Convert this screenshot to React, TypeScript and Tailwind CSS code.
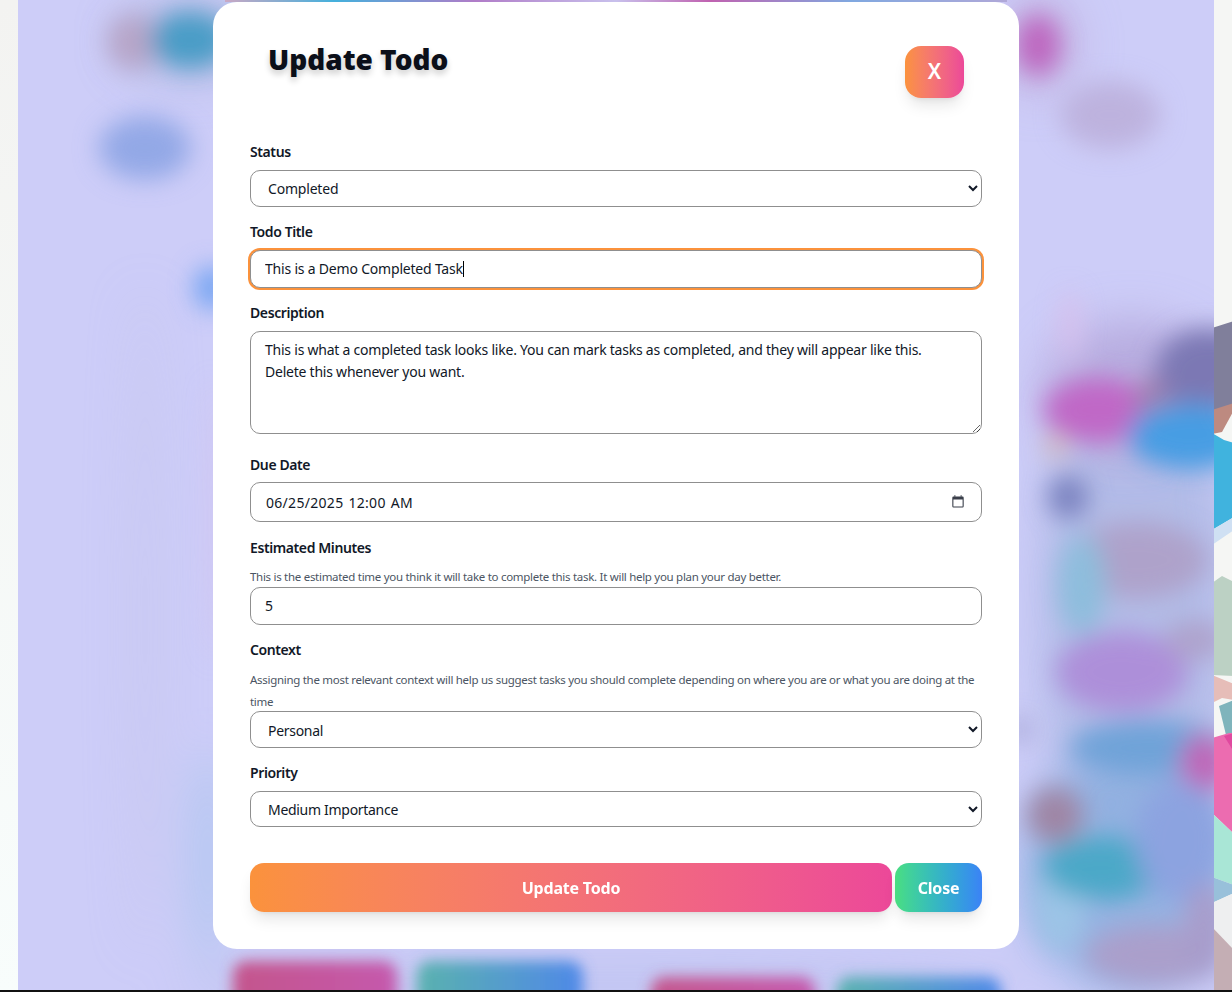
import React from "react";

const haze: [number, number, number, number, string, number][] = [
  [1135, 610, 95, 290, "#a9b6e2", 0.75],
  [1125, 870, 105, 120, "#8fb0e0", 0.9],
  [1130, 390, 90, 70, "#b8a8dc", 0.8],
  [190, 40, 70, 40, "#a8b4dc", 0.7],
  [208, 860, 14, 110, "#a6c4ec", 0.9],
  [600, 985, 420, 22, "#b8c0ec", 0.6],
  [1040, 45, 36, 50, "#bfa8d8", 0.7],
  [145, 620, 14, 330, "#c4c4ec", 0.6],
];

const blobs: [number, number, number, number, string][] = [
  [133, 42, 26, 28, "#b7a5c8"],
  [190, 40, 40, 28, "#4a9cc6"],
  [145, 148, 46, 32, "#93a8e6"],
  [212, 288, 18, 22, "#74a4f2"],
  [214, 520, 5, 140, "#d2c2ee"],
  [1038, 45, 22, 30, "#bd66bf"],
  [1110, 115, 50, 34, "#bdb2de"],
  [1070, 325, 9, 34, "#d8bfec"],
  [1098, 410, 54, 32, "#c068c6"],
  [1165, 398, 30, 24, "#a080b0"],
  [1208, 368, 52, 40, "#7b78b4"],
  [1056, 446, 9, 11, "#dcb8a8"],
  [1068, 497, 20, 22, "#7a82bf"],
  [1190, 436, 62, 33, "#479de3"],
  [1138, 560, 70, 38, "#aea2ca"],
  [1082, 585, 24, 50, "#8dbddc"],
  [1122, 672, 66, 40, "#ad8fd9"],
  [1195, 640, 30, 20, "#aea3cc"],
  [1150, 748, 80, 28, "#70a3d8"],
  [1204, 764, 24, 30, "#bf66b8"],
  [1020, 730, 8, 12, "#9a9acb"],
  [1060, 900, 26, 50, "#9cc4e6"],
  [1055, 815, 28, 28, "#9f85a4"],
  [1102, 868, 60, 32, "#4ca8c8"],
  [1180, 840, 44, 60, "#8ca3e0"],
  [1155, 955, 70, 30, "#aa9fcb"],
  [1205, 930, 22, 48, "#a79ccb"],
];

function Backdrop() {
  return (
    <svg className="absolute inset-0 h-full w-full" viewBox="18 0 1196 992" aria-hidden="true">
      <defs>
        <filter id="wide" x="-100%" y="-100%" width="300%" height="300%">
          <feGaussianBlur stdDeviation="22" />
        </filter>
        <filter id="soft" x="-80%" y="-80%" width="260%" height="260%">
          <feGaussianBlur stdDeviation="12" />
        </filter>
        <filter id="card" x="-30%" y="-60%" width="160%" height="220%">
          <feGaussianBlur stdDeviation="7" />
        </filter>
        <linearGradient id="pinkcard" x1="0" x2="1" y1="0" y2="0">
          <stop offset="0" stopColor="#c4558c" />
          <stop offset="1" stopColor="#c559ad" />
        </linearGradient>
        <linearGradient id="bluecard" x1="0" x2="1" y1="0" y2="0">
          <stop offset="0" stopColor="#5ab2ae" />
          <stop offset="1" stopColor="#4f88e8" />
        </linearGradient>
        <linearGradient id="topband" x1="0" x2="1" y1="0" y2="0">
          <stop offset="0" stopColor="#c9a8c4" />
          <stop offset="0.14" stopColor="#44b0dc" />
          <stop offset="0.32" stopColor="#b07cc8" />
          <stop offset="0.5" stopColor="#c8c0ec" />
          <stop offset="0.62" stopColor="#c062b0" />
          <stop offset="0.8" stopColor="#80a8e0" />
          <stop offset="1" stopColor="#b0a8d8" />
        </linearGradient>
      </defs>
      <g filter="url(#wide)">
        {haze.map(([cx, cy, rx, ry, fill, op], i) => (
          <ellipse key={i} cx={cx} cy={cy} rx={rx} ry={ry} fill={fill} opacity={op} />
        ))}
      </g>
      <g filter="url(#soft)">
        {blobs.map(([cx, cy, rx, ry, fill], i) => (
          <ellipse key={i} cx={cx} cy={cy} rx={rx} ry={ry} fill={fill} />
        ))}
      </g>
      <g filter="url(#card)">
        <rect x="233" y="961" width="164" height="50" rx="14" fill="url(#pinkcard)" />
        <rect x="417" y="961" width="166" height="50" rx="14" fill="url(#bluecard)" />
        <rect x="651" y="977" width="164" height="50" rx="14" fill="url(#pinkcard)" />
        <rect x="837" y="977" width="164" height="50" rx="14" fill="url(#bluecard)" />
      </g>
      <rect x="225" y="0" width="782" height="2" fill="url(#topband)" />
    </svg>
  );
}

function RightStrip() {
  return (
    <svg className="h-full w-[18px] shrink-0" viewBox="0 0 18 992" aria-hidden="true">
      <defs>
        <filter id="edge">
          <feGaussianBlur stdDeviation="0.7" />
        </filter>
      </defs>
      <rect width="18" height="992" fill="#f5f6f4" />
      <g filter="url(#edge)">
        <polygon points="-2,328 20,321 20,404 -2,412" fill="#807f9b" />
        <polygon points="-2,410 20,403 20,410 8,432 -2,434" fill="#bd8a80" />
        <polygon points="-2,433 10,440 20,443 20,517 -2,530" fill="#3fb3de" />
        <polygon points="-2,530 20,517 20,530 -2,545" fill="#cfe0f3" />
        <polygon points="-2,583 8,576 20,582 20,676 -2,675" fill="#bcd1c4" />
        <polygon points="-2,675 20,684 20,700 8,698 -2,703" fill="#e6bdb8" />
        <polygon points="5,706 20,700 20,735 12,735" fill="#7fb4bc" />
        <polygon points="-2,738 15,733 20,733 20,834 -2,813" fill="#ec6cb0" />
        <polygon points="10,736 20,733 20,752" fill="#e0489f" />
        <polygon points="-2,813 20,834 20,885 -2,877" fill="#a9e6d6" />
        <polygon points="-2,877 20,885 20,893 -2,903" fill="#98c0da" />
        <polygon points="-2,903 20,893 20,950 -2,927" fill="#eeeff0" />
        <polygon points="-2,927 20,950 20,994 -2,994" fill="#c4aeb4" />
      </g>
    </svg>
  );
}

const label = "block h-5 text-[14px] leading-5 font-semibold tracking-[-0.4px] text-[#111827]";
const control =
  "block w-full rounded-[10px] border border-[#8f8f8f] bg-white text-[14px] text-[#111827] outline-none";
const help = "text-[11.5px] leading-[22px] tracking-[-0.29px] text-[#4b5563]";

export default function App() {
  return (
    <div className="flex h-[992px] w-[1232px] overflow-hidden bg-white font-['Noto_Sans','Open_Sans',sans-serif]">
      <div className="h-full w-[18px] shrink-0 bg-gradient-to-b from-[#f3f3f1] to-[#f8fdfc]" />
      <div className="relative flex h-full flex-1 justify-center bg-[#cdcdf8] pt-[2px]">
        <Backdrop />
        <form className="relative h-[947px] w-[806px] rounded-[24px] bg-white px-[37px] pt-[44px]">
          <div className="flex items-start justify-between px-[18px]">
            <h2 className="mt-[-2px] text-[28px] leading-[30px] font-black text-[#0b0f19] [text-shadow:0_4px_6px_rgba(0,0,0,0.2)]">
              Update Todo
            </h2>
            <button
              type="button"
              className="h-[52px] w-[59px] rounded-[16px] bg-gradient-to-r from-[#fb923c] to-[#ec4899] text-[21px] font-semibold text-white shadow-lg"
            >
              X
            </button>
          </div>

          <label className={`${label} mt-[44px]`}>Status</label>
          <select className={`${control} mt-2 h-[37px] pl-[13px] tracking-[-0.2px]`} defaultValue="Completed">
            <option>Completed</option>
            <option>In Progress</option>
            <option>Not Started</option>
          </select>

          <label className={`${label} mt-[15px]`}>Todo Title</label>
          <div className="relative mt-2">
            <input
              className={`${control} h-[38px] px-[14px] pb-px tracking-[-0.2px] shadow-[0_0_0_2px_#fb923c]`}
              defaultValue="This is a Demo Completed Task"
            />
            <span className="absolute top-[11px] left-[213px] h-[16px] w-px bg-black" />
          </div>

          <label className={`${label} mt-[15px]`}>Description</label>
          <textarea
            className={`${control} mt-2 h-[103px] py-[7px] pr-[40px] pl-[14px] leading-[22px] tracking-[-0.23px]`}
            defaultValue="This is what a completed task looks like. You can mark tasks as completed, and they will appear like this. Delete this whenever you want."
          />

          <label className={`${label} mt-[21px]`}>Due Date</label>
          <div className="relative mt-[7px]">
            <input
              className={`${control} h-[40px] px-[15px] tracking-[0.3px] [word-spacing:1px]`}
              defaultValue="06/25/2025 12:00 AM"
            />
            <svg
              className="absolute top-[13px] left-[702px] h-[13px] w-[12px]"
              viewBox="0 0 12 13"
              aria-hidden="true"
            >
              <path
                d="M2.5 0v1.5h-1A1.2 1.2 0 0 0 .3 2.7v8.6a1.2 1.2 0 0 0 1.2 1.2h9a1.2 1.2 0 0 0 1.2-1.2V2.7a1.2 1.2 0 0 0-1.2-1.2h-1V0H8.7v1.5H3.3V0zM1.4 4.5h9.2v6.9H1.4z"
                fill="#3a3f4a"
              />
            </svg>
          </div>

          <label className={`${label} mt-4`}>Estimated Minutes</label>
          <p className={`${help} mt-2 mb-[-1px]`}>
            This is the estimated time you think it will take to complete this task. It will help you plan your day better.
          </p>
          <input type="number" className={`${control} h-[38px] px-[14px] pb-px`} defaultValue={5} />

          <label className={`${label} mt-[15px]`}>Context</label>
          <p className={`${help} mt-[9px] mb-[-2px]`}>
            Assigning the most relevant context will help us suggest tasks you should complete depending on where you are or what you are doing at the time
          </p>
          <select className={`${control} h-[37px] pt-px pl-[13px] tracking-[-0.3px]`} defaultValue="Personal">
            <option>Personal</option>
            <option>Work</option>
          </select>

          <label className={`${label} mt-[15px]`}>Priority</label>
          <select className={`${control} mt-2 h-[36px] pl-[13px] tracking-[-0.3px]`} defaultValue="Medium Importance">
            <option>Low Importance</option>
            <option>Medium Importance</option>
            <option>High Importance</option>
          </select>

          <div className="mt-[36px] flex gap-[3px]">
            <button
              type="button"
              className="h-[49px] w-[642px] rounded-[14px] bg-gradient-to-r from-[#fb923c] to-[#ec4899] text-[16px] font-bold tracking-[-0.2px] text-white shadow-lg"
            >
              Update Todo
            </button>
            <button
              type="button"
              className="h-[49px] flex-1 rounded-[14px] bg-gradient-to-r from-[#4ade80] to-[#3b82f6] text-[16px] font-bold tracking-[-0.2px] text-white shadow-lg"
            >
              Close
            </button>
          </div>
        </form>
      </div>
      <RightStrip />
      <div className="fixed bottom-0 left-0 h-[2px] w-[1232px] bg-[#111]" />
    </div>
  );
}
